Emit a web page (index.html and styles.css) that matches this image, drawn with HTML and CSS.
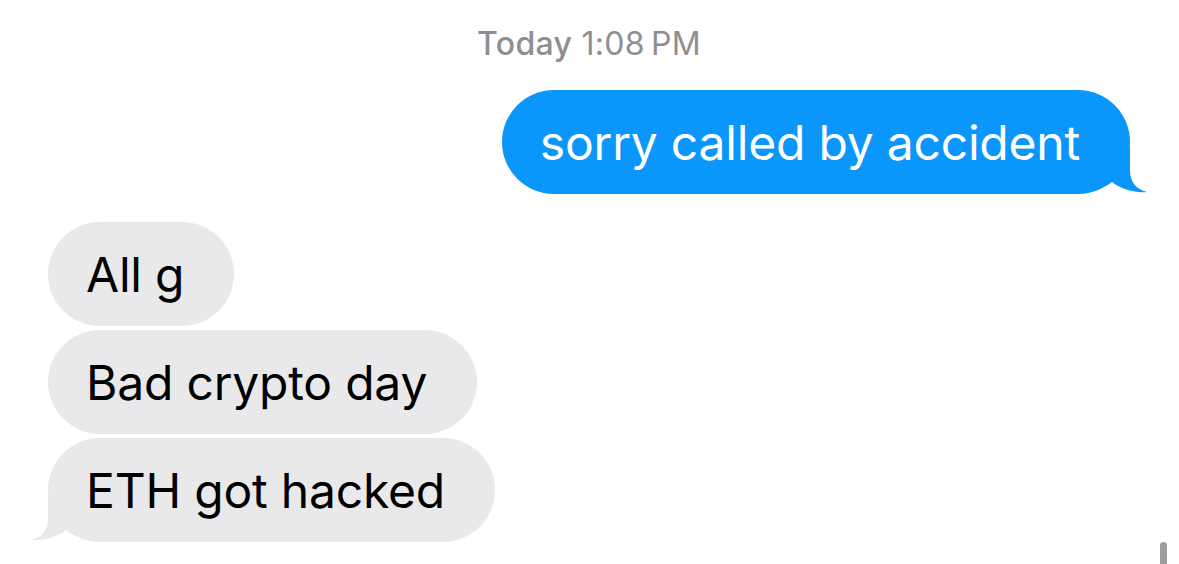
FILE: index.html
```html
<!DOCTYPE html>
<html lang="en">
<head>
<meta charset="utf-8">
<title>Messages</title>
<link rel="stylesheet" href="styles.css">
</head>
<body>
<main class="thread">
  <div class="stamp"><span class="stamp-day">Today</span> 1:08&#8201;PM</div>

  <div class="row row-out">
    <div class="bubble bubble-out">
      <span class="msg">sorry called by accident</span>
      <svg class="tail tail-out" width="80" height="46" viewBox="0 0 80 46"><path d="M10 0 H60 V22 C60 34 66 41 77 44 C66 45 52 42 42 34 C34 40 22 44 10 44 Z"/></svg>
    </div>
  </div>

  <div class="group-in">
    <div class="row"><div class="bubble bubble-in"><span class="msg">All g</span></div></div>
    <div class="row"><div class="bubble bubble-in"><span class="msg">Bad crypto day</span></div></div>
    <div class="row">
      <div class="bubble bubble-in">
        <span class="msg">ETH got hacked</span>
        <svg class="tail tail-in" width="80" height="46" viewBox="0 0 80 46"><path d="M10 0 H60 V22 C60 34 66 41 77 44 C66 45 52 42 42 34 C34 40 22 44 10 44 Z"/></svg>
      </div>
    </div>
  </div>
</main>
<div class="scrollbar"></div>
</body>
</html>
```

FILE: styles.css
```css
html, body {
  margin: 0;
  padding: 0;
  background: #ffffff;
}

body {
  width: 1179px;
  height: 564px;
  overflow: hidden;
  position: relative;
  font-family: "Inter", "Liberation Sans", sans-serif;
}

.thread {
  display: flex;
  flex-direction: column;
  padding: 25px 49px 0 48px;
}

.stamp {
  text-align: center;
  font-size: 32px;
  line-height: 38px;
  color: #8e8e93;
  letter-spacing: 0.3px;
}

.stamp-day {
  font-weight: 500;
}

.row {
  display: flex;
}

.row-out {
  justify-content: flex-end;
  margin-top: 27px;
}

.bubble {
  position: relative;
  font-size: 48px;
  line-height: 58px;
  padding: 24px 50px 22px 38px;
  border-radius: 52px;
  letter-spacing: -0.2px;
  white-space: nowrap;
}

.msg {
  position: relative;
  z-index: 1;
}

.bubble-out {
  background: #0b96fc;
  color: #ffffff;
}

.bubble-in {
  background: #e9e9eb;
  color: #000000;
}

.group-in {
  display: flex;
  flex-direction: column;
  gap: 4px;
  margin-top: 28px;
}

.tail {
  position: absolute;
  bottom: 0;
}

.tail-out {
  right: -20px;
  fill: #0b96fc;
}

.tail-in {
  left: -20px;
  fill: #e9e9eb;
  transform: scaleX(-1);
}

.scrollbar {
  position: absolute;
  left: 1160px;
  top: 542px;
  width: 7px;
  height: 30px;
  border-radius: 4px;
  background: #9d9d9d;
}
```
